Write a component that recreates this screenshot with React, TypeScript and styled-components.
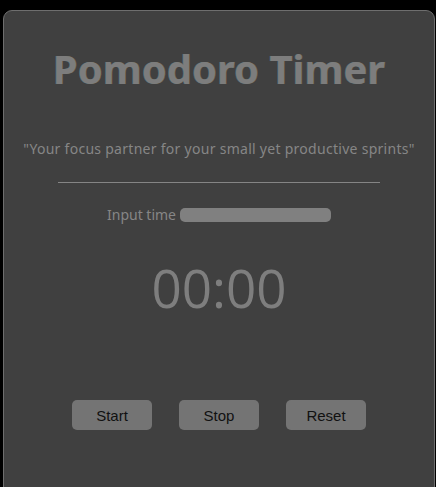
import React from "react";
import styled, { createGlobalStyle } from "styled-components";

const Global = createGlobalStyle`
  html, body { margin: 0; padding: 0; background: #000; overflow: hidden; }
  body { font-family: "Liberation Sans", Arial, sans-serif; }
`;

const Page = styled.div`
  padding: 10px 1px 0 3px;
  height: 487px;
  box-sizing: border-box;
  overflow: hidden;
`;

const Card = styled.div`
  width: 432px;
  height: 500px;
  box-sizing: border-box;
  background: #404040;
  border: 1px solid #6e6e6e;
  border-radius: 9px;
  display: flex;
  flex-direction: column;
  align-items: center;
  font-family: "Noto Sans", "Open Sans", sans-serif;
`;

const Title = styled.h1`
  margin: 34px 0 0;
  font-size: 40px;
  line-height: 48px;
  font-weight: 700;
  color: #7d7d7d;
  text-shadow: -0.5px 0 0 rgba(90, 170, 190, 0.35), 0.5px 0 0 rgba(190, 140, 80, 0.35);
`;

const Tagline = styled.p`
  margin: 47px 0 0;
  font-size: 14px;
  line-height: 18px;
  letter-spacing: 0.28px;
  color: #868686;
`;

const Divider = styled.hr`
  width: 322px;
  margin: 24px 0 0;
  border: none;
  border-top: 1px solid #858585;
`;

const InputRow = styled.label`
  margin-top: 23px;
  display: flex;
  align-items: center;
  gap: 4px;
  font-size: 14px;
  line-height: 18px;
  color: #868686;
`;

const TimeInput = styled.div`
  width: 151px;
  height: 14px;
  border-radius: 5px;
  background: #808080;
`;

const Clock = styled.div`
  margin-top: 34px;
  font-family: "Open Sans", "Noto Sans", sans-serif;
  font-size: 53px;
  line-height: 60px;
  font-weight: 400;
  color: #7e7e7e;
`;

const Buttons = styled.div`
  margin-top: 82px;
  display: flex;
  gap: 27px;
`;

const Button = styled.button`
  width: 80px;
  height: 30px;
  border: none;
  border-radius: 5px;
  background: #747474;
  color: #111;
  font-family: "Liberation Sans", Arial, sans-serif;
  font-size: 15px;
  padding: 0;
`;

export default function App() {
  return (
    <>
      <Global />
      <Page>
        <Card>
          <Title>Pomodoro Timer</Title>
          <Tagline>"Your focus partner for your small yet productive sprints"</Tagline>
          <Divider />
          <InputRow>
            Input time
            <TimeInput />
          </InputRow>
          <Clock>00:00</Clock>
          <Buttons>
            <Button>Start</Button>
            <Button>Stop</Button>
            <Button>Reset</Button>
          </Buttons>
        </Card>
      </Page>
    </>
  );
}
